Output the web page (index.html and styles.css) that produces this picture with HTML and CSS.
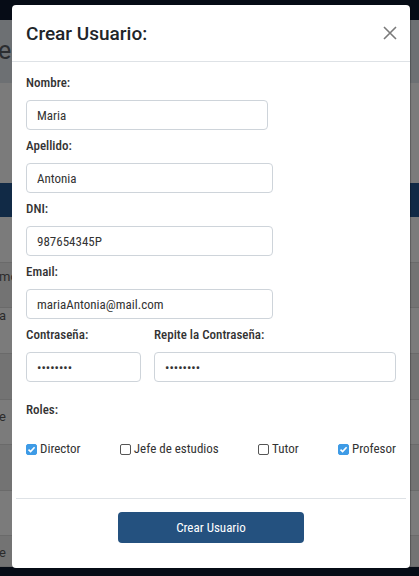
FILE: index.html
```html
<!DOCTYPE html>
<html lang="es">
<head>
<meta charset="utf-8">
<title>Crear Usuario</title>
<link rel="stylesheet" href="styles.css">
</head>
<body>
<div class="page">
  <div class="topbar"></div>
  <div class="pagehead"><span class="pagehead-text">es</span></div>
  <div class="section"></div>
  <div class="navband"></div>
  <div class="row light r46"></div>
  <div class="row dark r45"><span class="cell p6">mo</span></div>
  <div class="row light r46"><span class="cell p0">a</span></div>
  <div class="row dark r46"></div>
  <div class="row light r45"><span class="cell p9">e</span></div>
  <div class="row dark r46"></div>
  <div class="row light r45"></div>
  <div class="row dark r31"><span class="cell p9">e</span></div>
  <div class="bottombar"></div>
</div>

<div class="modal">
  <div class="modal-header">
    <h1 class="modal-title">Crear Usuario:</h1>
    <button class="close" aria-label="Cerrar">
      <svg width="14" height="14" viewBox="0 0 14 14"><path d="M1 1L13 13M13 1L1 13" stroke="#7a7a7a" stroke-width="1.6" fill="none"/></svg>
    </button>
  </div>
  <div class="modal-body">
    <div class="group">
      <label class="lbl">Nombre:</label>
      <input class="field w241" type="text" value="Maria">
    </div>
    <div class="group">
      <label class="lbl">Apellido:</label>
      <input class="field w246" type="text" value="Antonia">
    </div>
    <div class="group">
      <label class="lbl">DNI:</label>
      <input class="field w246" type="text" value="987654345P">
    </div>
    <div class="group">
      <label class="lbl">Email:</label>
      <input class="field w246" type="text" value="mariaAntonia@mail.com">
    </div>
    <div class="pwrow">
      <div class="group">
        <label class="lbl">Contraseña:</label>
        <input class="field w115" type="password" value="12345678">
      </div>
      <div class="group grow">
        <label class="lbl">Repite la Contraseña:</label>
        <input class="field full" type="password" value="12345678">
      </div>
    </div>
    <div class="lbl roles">Roles:</div>
    <div class="checks">
      <label class="chk"><span class="box on"><svg width="9" height="9" viewBox="0 0 9 9"><path d="M1.5 4.6L3.6 6.6L7.6 2.2" stroke="#fff" stroke-width="1.6" fill="none"/></svg></span>Director</label>
      <label class="chk"><span class="box"></span>Jefe de estudios</label>
      <label class="chk"><span class="box"></span>Tutor</label>
      <label class="chk"><span class="box on"><svg width="9" height="9" viewBox="0 0 9 9"><path d="M1.5 4.6L3.6 6.6L7.6 2.2" stroke="#fff" stroke-width="1.6" fill="none"/></svg></span>Profesor</label>
    </div>
  </div>
  <div class="modal-footer">
    <button class="btn">Crear Usuario</button>
  </div>
</div>
</body>
</html>
```

FILE: styles.css
```css
* { box-sizing: border-box; }
html, body { margin: 0; padding: 0; }
body {
  width: 419px;
  height: 576px;
  overflow: hidden;
  position: relative;
  font-family: Roboto, "Liberation Sans", sans-serif;
  background: #7a7a7a;
}
.page { display: flex; flex-direction: column; }
.topbar { height: 20px; background: #060c16; }
.pagehead {
  height: 63px;
  background: #6d7073;
  display: flex;
  align-items: center;
  overflow: hidden;
}
.pagehead-text {
  font-size: 25px;
  color: #2b2d30;
  margin-left: -2px;
  white-space: nowrap;
  margin-top: -2px;
}
.section { height: 100px; background: #7b7b7b; }
.navband { height: 34px; background: #112a46; }
.row {
  border-bottom: 1px solid #6a6a6a;
  display: flex;
  align-items: flex-start;
  overflow: hidden;
}
.r46 { height: 46px; }
.r45 { height: 45px; }
.r31 { height: 31px; }
.row.light { background: #7b7b7b; }
.row.dark { background: #737373; }
.cell {
  font-size: 13px;
  line-height: 16px;
  color: #2b2b2b;
  white-space: nowrap;
  margin-left: -1px;
  font-stretch: 90%;
}
.p0 { padding-top: 0; }
.p6 { padding-top: 6px; }
.p9 { padding-top: 9px; }
.bottombar { height: 10px; background: #060c16; }

.modal {
  position: absolute;
  left: 12px;
  top: 5px;
  width: 398px;
  height: 563px;
  background: #fff;
  border-radius: 4px;
  box-shadow: 1px 0 1px rgba(0,0,0,0.25);
  display: flex;
  flex-direction: column;
}
.modal-header {
  height: 57px;
  border-bottom: 1px solid #dee2e6;
  display: flex;
  align-items: center;
  justify-content: space-between;
  padding: 0 13px 0 14px;
}
.modal-title {
  margin: 0;
  font-size: 19px;
  font-weight: 500;
  color: #212529;
  line-height: 24px;
  margin-top: 2px;
}
.close {
  border: 0;
  background: none;
  padding: 0;
  width: 14px;
  height: 14px;
  display: flex;
  margin-top: -1px;
}
.modal-body {
  padding: 12px 14px 0;
  flex: 1;
  font-stretch: 87%;
}
.group { margin-bottom: 7px; }
.lbl {
  display: block;
  font-size: 13px;
  font-weight: 500;
  line-height: 18px;
  color: #333;
  margin-bottom: 8px;
}
.field {
  display: block;
  height: 30px;
  border: 1px solid #ced4da;
  border-radius: 4px;
  padding: 0 10px;
  font-family: Roboto, "Liberation Sans", sans-serif;
  font-size: 13px;
  font-stretch: 87%;
  color: #333;
  background: #fff;
  outline: none;
}
.w241 { width: 242px; }
.w246 { width: 247px; }
.w115 { width: 115px; }
.full { width: 100%; }
.pwrow { display: flex; gap: 13px; }
.grow { flex: 1; }
.roles { margin-top: 12px; margin-bottom: 21px; }
.checks {
  display: flex;
  justify-content: space-between;
  height: 18px;
}
.chk {
  display: flex;
  align-items: center;
  font-size: 13px;
  line-height: 18px;
  color: #333;
}
.box {
  width: 11px;
  height: 11px;
  border: 1px solid #555;
  border-radius: 2px;
  margin-right: 3px;
  display: flex;
  align-items: center;
  justify-content: center;
}
.box.on { background: #3e9be6; border-color: #3e9be6; }
.modal-footer {
  margin: 0 4px;
  border-top: 1px solid #dee2e6;
  padding: 13px 0 25px;
  display: flex;
  justify-content: center;
}
.btn {
  width: 186px;
  height: 31px;
  background: #24517f;
  color: #fff;
  border: 0;
  border-radius: 4px;
  font-family: Roboto, "Liberation Sans", sans-serif;
  font-size: 13px;
  font-stretch: 87%;
}
```
